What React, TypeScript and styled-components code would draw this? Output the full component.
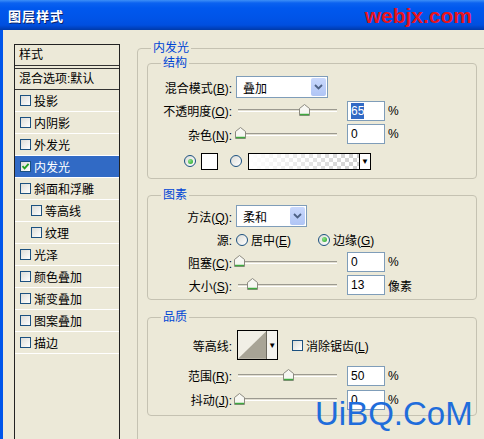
import styled, { createGlobalStyle } from "styled-components";

const GlobalStyle = createGlobalStyle`
  html, body {
    margin: 0;
    padding: 0;
    background: #ece9d8;
  }
  body {
    font-family: "Liberation Sans", "Noto Sans CJK SC", sans-serif;
    font-size: 12px;
    color: #000;
  }
`;

const Window = styled.div`
  position: relative;
  width: 484px;
  height: 439px;
  overflow: hidden;
  display: flex;
  flex-direction: column;
  background: #ece9d8;
`;

const TitleBar = styled.div`
  height: 30px;
  flex-shrink: 0;
  display: flex;
  align-items: center;
  justify-content: space-between;
  padding: 0 12px 0 8px;
  background: linear-gradient(
    to bottom,
    #3d8ff7 0px,
    #0b62f0 3px,
    #0058ee 8px,
    #0054e8 18px,
    #004fdf 25px,
    #0042c0 28px,
    #003aa8 30px
  );
`;

const Title = styled.div`
  color: #fff;
  font-family: "Noto Sans CJK SC", sans-serif;
  font-weight: bold;
  font-size: 13px;
  letter-spacing: 1px;
  text-shadow: 1px 1px 0 #0a246a;
`;

const Brand = styled.div`
  color: #e8141e;
  font-family: "Liberation Sans", sans-serif;
  font-weight: bold;
  font-size: 21px;
  line-height: 1;
`;

const Body = styled.div`
  flex: 1;
  min-height: 0;
  display: flex;
  border-left: 3px solid #0055ea;
`;

const Sidebar = styled.div`
  flex-shrink: 0;
  padding: 14px 0 0 11px;
`;

const StyleList = styled.div`
  width: 106px;
  height: 420px;
  box-sizing: border-box;
  border: 1px solid #222;
  border-bottom: none;
`;

const ListHeader = styled.div`
  height: 20px;
  line-height: 20px;
  padding-left: 4px;
  border-bottom: 1px solid #333;
  margin-bottom: 2px;
`;

const BlendRow = styled.div`
  height: 20px;
  line-height: 20px;
  padding-left: 4px;
  border-top: 1px solid #333;
  border-bottom: 1px solid #333;
`;

const Item = styled.div<{ $indent?: boolean; $selected?: boolean }>`
  height: 21px;
  display: flex;
  align-items: center;
  gap: 3px;
  padding-left: ${(p) => (p.$indent ? 16 : 5)}px;
  border-bottom: 1px solid #fff;
  background: ${(p) => (p.$selected ? "#316ac5" : "transparent")};
  color: ${(p) => (p.$selected ? "#fff" : "#000")};
`;

const CheckBox = styled.span`
  width: 11px;
  height: 11px;
  box-sizing: border-box;
  flex-shrink: 0;
  border: 1px solid #1c5180;
  background: linear-gradient(135deg, #dcdcd7, #fff);
  display: flex;
  align-items: center;
  justify-content: center;
`;

const Main = styled.div`
  flex: 1;
  min-width: 0;
  padding: 11px 0 0 17px;
`;

const OuterGroup = styled.fieldset`
  margin: 0 -30px 0 0;
  padding: 1px 0 0 9px;
  height: 420px;
  min-width: 0;
  border: 1px solid #c5c2b2;
  border-radius: 4px;
`;

const Legend = styled.legend<{ $offset: number }>`
  color: #0046d5;
  font-size: 12px;
  line-height: 14px;
  padding: 0 2px;
  margin-left: ${(p) => p.$offset}px;
`;

const Group = styled.fieldset<{ $mt: number; $pt: number; $pb: number }>`
  width: 330px;
  box-sizing: border-box;
  margin: ${(p) => p.$mt}px 0 0 0;
  padding: ${(p) => p.$pt}px 0 ${(p) => p.$pb}px 0;
  min-width: 0;
  border: 1px solid #c5c2b2;
  border-radius: 4px;
`;

const Row = styled.div<{ $h: number; $pl?: number }>`
  height: ${(p) => p.$h}px;
  display: flex;
  align-items: center;
  padding-left: ${(p) => p.$pl ?? 0}px;
`;

const Label = styled.span`
  width: 84px;
  margin-right: 4px;
  flex-shrink: 0;
  text-align: right;
  white-space: nowrap;
`;

const Key = styled.span`
  text-decoration: underline;
`;

const SliderBox = styled.div`
  position: relative;
  width: 101px;
  height: 14px;
  flex-shrink: 0;
  display: flex;
  align-items: center;
`;

const Track = styled.div`
  flex: 1;
  margin-left: 2px;
  height: 1px;
  background: #e2dfd2;
  border-top: 1px solid #9c9a90;
  border-bottom: 1px solid #fff;
`;

const ThumbWrap = styled.span`
  position: absolute;
  top: 0;
  width: 11px;
  height: 12px;
  display: flex;
`;

const NumBox = styled.div`
  width: 38px;
  height: 20px;
  box-sizing: border-box;
  margin-left: 10px;
  padding-left: 3px;
  border: 1px solid #7f9db9;
  background: #fff;
  line-height: 18px;
  flex-shrink: 0;
`;

const Picked = styled.span`
  background: #316ac5;
  color: #fff;
  padding: 1px 0;
`;

const Unit = styled.span`
  margin-left: 3px;
`;

const Select = styled.div<{ $w: number }>`
  width: ${(p) => p.$w}px;
  height: 22px;
  box-sizing: border-box;
  border: 1px solid #7f9db9;
  background: #fff;
  display: flex;
  align-items: center;
  justify-content: space-between;
  padding-left: 6px;
  flex-shrink: 0;
`;

const DropButton = styled.span`
  width: 15px;
  height: 18px;
  margin-right: 1px;
  border-radius: 2px;
  background: linear-gradient(to bottom, #c9d8fc, #b0c5f5);
  display: flex;
  align-items: center;
  justify-content: center;
`;

const RadioLabel = styled.span<{ $w?: number }>`
  display: flex;
  align-items: center;
  gap: 3px;
  width: ${(p) => (p.$w ? `${p.$w}px` : "auto")};
  flex-shrink: 0;
`;

const RadioCircle = styled.span`
  width: 12px;
  height: 12px;
  box-sizing: border-box;
  border-radius: 50%;
  border: 1px solid #1c5180;
  background: linear-gradient(135deg, #dcdcd7, #fff);
  display: flex;
  align-items: center;
  justify-content: center;
  flex-shrink: 0;
`;

const RadioDot = styled.span`
  width: 5px;
  height: 5px;
  border-radius: 50%;
  background: radial-gradient(circle at 35% 35%, #8be28b, #21a121);
`;

const ColorSwatch = styled.span`
  width: 17px;
  height: 17px;
  box-sizing: border-box;
  border: 1px solid #000;
  background: #fff;
  margin: 0 12px 0 5px;
`;

const GradientSwatch = styled.span`
  width: 123px;
  height: 17px;
  box-sizing: border-box;
  border: 1px solid #000;
  margin-left: 6px;
  display: flex;
`;

const GradientFill = styled.span`
  flex: 1;
  background:
    linear-gradient(to right, #fff 0%, rgba(255, 255, 255, 0) 100%),
    repeating-conic-gradient(#cfcfcf 0% 25%, #fff 0% 50%) 0 0 / 8px 8px;
`;

const SmallDrop = styled.span`
  width: 10px;
  border-left: 1px solid #000;
  background: #fff;
  display: flex;
  align-items: center;
  justify-content: center;
  font-size: 8px;
`;

const Contour = styled.div`
  width: 41px;
  height: 30px;
  box-sizing: border-box;
  margin-left: 1px;
  border: 1px solid #000;
  display: flex;
  flex-shrink: 0;
  background: #f1efe6;
`;

const ContourDrop = styled.span`
  width: 10px;
  border-left: 1px solid #6d6a60;
  background: #f4f3ee;
  display: flex;
  align-items: center;
  justify-content: center;
  font-size: 8px;
`;

const CheckLabel = styled.span`
  display: flex;
  align-items: center;
  gap: 3px;
  margin-left: 14px;
`;

const Watermark = styled.div`
  position: absolute;
  left: 315px;
  top: 397px;
  font-family: "Liberation Sans", sans-serif;
  font-size: 33px;
  line-height: 1;
  color: #1f6ddb;
`;

const Check = () => (
  <svg width="9" height="9" viewBox="0 0 9 9">
    <path d="M1.5 4.2 L3.6 6.4 L7.6 1.8" fill="none" stroke="#21a121" strokeWidth="1.8" />
  </svg>
);

const Chevron = () => (
  <svg width="9" height="6" viewBox="0 0 9 6">
    <path d="M1 1 L4.5 4.5 L8 1" fill="none" stroke="#4d6185" strokeWidth="1.8" />
  </svg>
);

const Slider = ({ pos }: { pos: number }) => (
  <SliderBox>
    <Track />
    <ThumbWrap style={{ left: pos - 236 - 5 }}>
      <svg width="11" height="12" viewBox="0 0 11 12">
        <path d="M0.5 4.5 L5.5 0.5 L10.5 4.5 V11.5 H0.5 Z" fill="#f7f7f2" stroke="#8c8a80" />
        <path d="M1 10.5 H10" stroke="#3fa83f" strokeWidth="1.5" />
      </svg>
    </ThumbWrap>
  </SliderBox>
);

const Radio = ({ on }: { on?: boolean }) => <RadioCircle>{on && <RadioDot />}</RadioCircle>;

const items: { text: string; indent?: boolean; selected?: boolean }[] = [
  { text: "投影" },
  { text: "内阴影" },
  { text: "外发光" },
  { text: "内发光", selected: true },
  { text: "斜面和浮雕" },
  { text: "等高线", indent: true },
  { text: "纹理", indent: true },
  { text: "光泽" },
  { text: "颜色叠加" },
  { text: "渐变叠加" },
  { text: "图案叠加" },
  { text: "描边" },
];

export default function App() {
  return (
    <Window>
      <GlobalStyle />
      <TitleBar>
        <Title>图层样式</Title>
        <Brand>webjx.com</Brand>
      </TitleBar>
      <Body>
        <Sidebar>
          <StyleList>
            <ListHeader>样式</ListHeader>
            <BlendRow>混合选项:默认</BlendRow>
            {items.map((it) => (
              <Item key={it.text} $indent={it.indent} $selected={it.selected}>
                <CheckBox>{it.selected && <Check />}</CheckBox>
                <span>{it.text}</span>
              </Item>
            ))}
          </StyleList>
        </Sidebar>
        <Main>
          <OuterGroup>
            <Legend $offset={4}>内发光</Legend>
            <Group $mt={0} $pt={5} $pb={2}>
              <Legend $offset={13}>结构</Legend>
              <Row $h={24}>
                <Label>
                  混合模式(<Key>B</Key>):
                </Label>
                <Select $w={92}>
                  <span>叠加</span>
                  <DropButton>
                    <Chevron />
                  </DropButton>
                </Select>
              </Row>
              <Row $h={23}>
                <Label>
                  不透明度(<Key>O</Key>):
                </Label>
                <Slider pos={304} />
                <NumBox>
                  <Picked>65</Picked>
                </NumBox>
                <Unit>%</Unit>
              </Row>
              <Row $h={24}>
                <Label>
                  杂色(<Key>N</Key>):
                </Label>
                <Slider pos={240} />
                <NumBox>0</NumBox>
                <Unit>%</Unit>
              </Row>
              <Row $h={30} $pl={36}>
                <Radio on />
                <ColorSwatch />
                <Radio />
                <GradientSwatch>
                  <GradientFill />
                  <SmallDrop>▼</SmallDrop>
                </GradientSwatch>
              </Row>
            </Group>
            <Group $mt={9} $pt={2} $pb={2}>
              <Legend $offset={13}>图素</Legend>
              <Row $h={24}>
                <Label>
                  方法(<Key>Q</Key>):
                </Label>
                <Select $w={71}>
                  <span>柔和</span>
                  <DropButton>
                    <Chevron />
                  </DropButton>
                </Select>
              </Row>
              <Row $h={23}>
                <Label>源:</Label>
                <RadioLabel $w={82}>
                  <Radio />
                  <span>
                    居中(<Key>E</Key>)
                  </span>
                </RadioLabel>
                <RadioLabel>
                  <Radio on />
                  <span>
                    边缘(<Key>G</Key>)
                  </span>
                </RadioLabel>
              </Row>
              <Row $h={22}>
                <Label>
                  阻塞(<Key>C</Key>):
                </Label>
                <Slider pos={239} />
                <NumBox>0</NumBox>
                <Unit>%</Unit>
              </Row>
              <Row $h={24}>
                <Label>
                  大小(<Key>S</Key>):
                </Label>
                <Slider pos={252} />
                <NumBox>13</NumBox>
                <Unit>像素</Unit>
              </Row>
            </Group>
            <Group $mt={10} $pt={3} $pb={4}>
              <Legend $offset={13}>品质</Legend>
              <Row $h={36}>
                <Label>等高线:</Label>
                <Contour>
                  <svg width="29" height="28" viewBox="0 0 29 28">
                    <path d="M0 28 L29 0 V28 Z" fill="#a8a496" />
                  </svg>
                  <ContourDrop>▼</ContourDrop>
                </Contour>
                <CheckLabel>
                  <CheckBox />
                  <span>
                    消除锯齿(<Key>L</Key>)
                  </span>
                </CheckLabel>
              </Row>
              <Row $h={25}>
                <Label>
                  范围(<Key>R</Key>):
                </Label>
                <Slider pos={288} />
                <NumBox>50</NumBox>
                <Unit>%</Unit>
              </Row>
              <Row $h={23}>
                <Label>
                  抖动(<Key>J</Key>):
                </Label>
                <Slider pos={239} />
                <NumBox>0</NumBox>
                <Unit>%</Unit>
              </Row>
            </Group>
          </OuterGroup>
        </Main>
      </Body>
      <Watermark>UiBQ.CoM</Watermark>
    </Window>
  );
}
